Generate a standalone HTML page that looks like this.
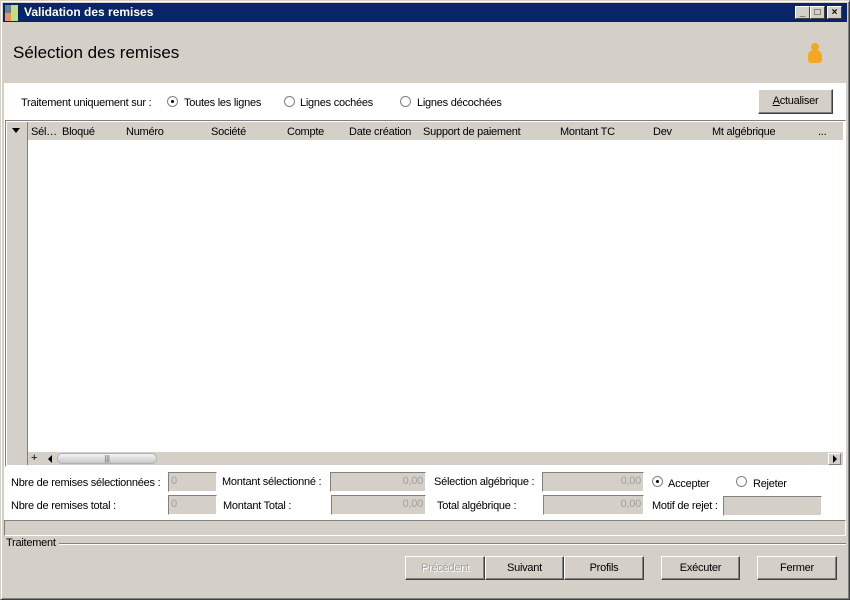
<!DOCTYPE html>
<html><head><meta charset="utf-8"><style>
*{margin:0;padding:0;box-sizing:border-box}
body{width:850px;height:600px;background:#d4d0c8;font-family:"Liberation Sans",sans-serif;font-size:11px;letter-spacing:-0.25px;color:#000;position:relative;overflow:hidden}
.a{position:absolute;white-space:nowrap}
.win{left:0;top:0;width:850px;height:600px;border:1px solid;border-color:#d4d0c8 #404040 #404040 #d4d0c8;box-shadow:inset 1px 1px #fff,inset -1px -1px #808080}
.btn{position:absolute;background:#d4d0c8;border:1px solid;border-color:#fff #404040 #404040 #fff;box-shadow:inset -1px -1px #808080;text-align:center;font-size:11px}
.fld{position:absolute;background:#d4d0c8;border:1px solid;border-color:#808080 #fff #fff #808080;color:#a0a0a0;font-size:11px;padding:0 2px;line-height:17px}
.rad{position:absolute;width:11px;height:11px;border-radius:50%;background:#fff;border:1px solid #808080}
.rad.on::after{content:"";position:absolute;left:3px;top:3px;width:3px;height:3px;border-radius:50%;background:#000}
.tb{position:absolute;top:6px;width:15px;height:13px;background:#d4d0c8;border:1px solid;border-color:#fff #404040 #404040 #fff;font-size:10px;font-weight:bold;text-align:center;line-height:11px;letter-spacing:0}
</style></head><body>
<div class="a win"></div>
<div class="a" style="left:3px;top:3px;width:844px;height:19px;background:#0a246a"></div>
<div class="a" style="left:5px;top:5px;width:6px;height:8px;background:#708090"></div>
<div class="a" style="left:11px;top:5px;width:7px;height:8px;background:#c0e080"></div>
<div class="a" style="left:5px;top:13px;width:6px;height:8px;background:#f09060"></div>
<div class="a" style="left:11px;top:13px;width:7px;height:8px;background:#c0e080"></div>
<div class="a" style="left:24px;top:5px;color:#fff;font-weight:bold;font-size:12px;letter-spacing:0">Validation des remises</div>
<div class="tb" style="left:795px">_</div>
<div class="tb" style="left:810px">□</div>
<div class="tb" style="left:827px">×</div>
<div class="a" style="left:13px;top:43px;font-size:17px;letter-spacing:0">Sélection des remises</div>
<div class="a" style="left:811px;top:43px;width:8px;height:8px;border-radius:50%;background:#f5a623"></div>
<div class="a" style="left:808px;top:50px;width:14px;height:13px;border-radius:6px 6px 3px 3px;background:#f5a623"></div>
<div class="a" style="left:4px;top:83px;width:842px;height:437px;background:#fff"></div>
<div class="a" style="left:21px;top:97px">Traitement uniquement sur :</div>
<div class="rad on" style="left:167px;top:96px"></div><div class="a" style="left:184px;top:97px">Toutes les lignes</div>
<div class="rad" style="left:284px;top:96px"></div><div class="a" style="left:300px;top:97px">Lignes cochées</div>
<div class="rad" style="left:400px;top:96px"></div><div class="a" style="left:417px;top:97px">Lignes décochées</div>
<div class="btn" style="left:758px;top:89px;width:75px;height:25px;line-height:23px"><u>A</u>ctualiser</div>
<div class="a" style="left:5px;top:120px;width:841px;height:347px;border:1px solid;border-color:#808080 #fff #fff #808080;background:#fff"></div>
<div class="a" style="left:7px;top:122px;width:21px;height:343px;background:#d4d0c8;border-right:1px solid #808080"></div>
<div class="a" style="left:28px;top:122px;width:815px;height:18px;background:#d4d0c8"></div>
<div class="a" style="left:12px;top:128px;width:0;height:0;border-left:4px solid transparent;border-right:4px solid transparent;border-top:5px solid #000"></div>
<div class="a" style="left:31px;top:126px">Sél…</div>
<div class="a" style="left:62px;top:126px">Bloqué</div>
<div class="a" style="left:126px;top:126px">Numéro</div>
<div class="a" style="left:211px;top:126px">Société</div>
<div class="a" style="left:287px;top:126px">Compte</div>
<div class="a" style="left:349px;top:126px">Date création</div>
<div class="a" style="left:423px;top:126px">Support de paiement</div>
<div class="a" style="left:560px;top:126px">Montant TC</div>
<div class="a" style="left:653px;top:126px">Dev</div>
<div class="a" style="left:712px;top:126px">Mt algébrique</div>
<div class="a" style="left:818px;top:126px">...</div>
<div class="a" style="left:28px;top:452px;width:815px;height:13px;background:#d4d0c8"></div>
<div class="a" style="left:31px;top:452px;font-size:11px">+</div>
<div class="a" style="left:48px;top:455px;width:0;height:0;border-top:4px solid transparent;border-bottom:4px solid transparent;border-right:4px solid #000"></div>
<div class="a" style="left:57px;top:453px;width:100px;height:11px;border-radius:5px;background:linear-gradient(#f4f4f4,#c8c8c8);border:1px solid #b0b0b0;font-size:8px;text-align:center;line-height:9px;color:#666">|||</div>
<div class="a" style="left:828px;top:453px;width:13px;height:12px;background:#d4d0c8;border:1px solid;border-color:#fff #808080 #808080 #fff"></div>
<div class="a" style="left:833px;top:455px;width:0;height:0;border-top:4px solid transparent;border-bottom:4px solid transparent;border-left:4px solid #000"></div>
<div class="a" style="left:11px;top:477px">Nbre de remises sélectionnées :</div>
<div class="fld" style="left:168px;top:472px;width:49px;height:20px">0</div>
<div class="a" style="left:222px;top:476px">Montant sélectionné :</div>
<div class="fld" style="left:330px;top:472px;width:96px;height:20px;text-align:right">0,00</div>
<div class="a" style="left:434px;top:476px">Sélection algébrique :</div>
<div class="fld" style="left:542px;top:472px;width:102px;height:20px;text-align:right">0,00</div>
<div class="rad on" style="left:652px;top:476px"></div><div class="a" style="left:668px;top:478px">Accepter</div>
<div class="rad" style="left:736px;top:476px"></div><div class="a" style="left:753px;top:478px">Rejeter</div>
<div class="a" style="left:11px;top:500px">Nbre de remises total :</div>
<div class="fld" style="left:168px;top:495px;width:49px;height:20px">0</div>
<div class="a" style="left:223px;top:500px">Montant Total :</div>
<div class="fld" style="left:331px;top:495px;width:95px;height:20px;text-align:right">0,00</div>
<div class="a" style="left:437px;top:500px">Total algébrique :</div>
<div class="fld" style="left:543px;top:495px;width:101px;height:20px;text-align:right">0,00</div>
<div class="a" style="left:652px;top:500px">Motif de rejet :</div>
<div class="fld" style="left:723px;top:496px;width:99px;height:20px"></div>
<div class="a" style="left:4px;top:520px;width:842px;height:16px;border:1px solid;border-color:#808080 #fff #fff #808080"></div>
<div class="a" style="left:6px;top:537px">Traitement</div>
<div class="a" style="left:59px;top:543px;width:787px;height:2px;border-top:1px solid #808080;border-bottom:1px solid #fff"></div>
<div class="btn" style="left:405px;top:556px;width:80px;height:24px;line-height:23px;color:#a0a0a0;text-shadow:1px 1px #fff">Précédent</div>
<div class="btn" style="left:485px;top:556px;width:79px;height:24px;line-height:23px">Suivant</div>
<div class="btn" style="left:564px;top:556px;width:80px;height:24px;line-height:23px">Profils</div>
<div class="btn" style="left:661px;top:556px;width:79px;height:24px;line-height:23px">Exécuter</div>
<div class="btn" style="left:757px;top:556px;width:80px;height:24px;line-height:23px">Fermer</div>
</body></html>
